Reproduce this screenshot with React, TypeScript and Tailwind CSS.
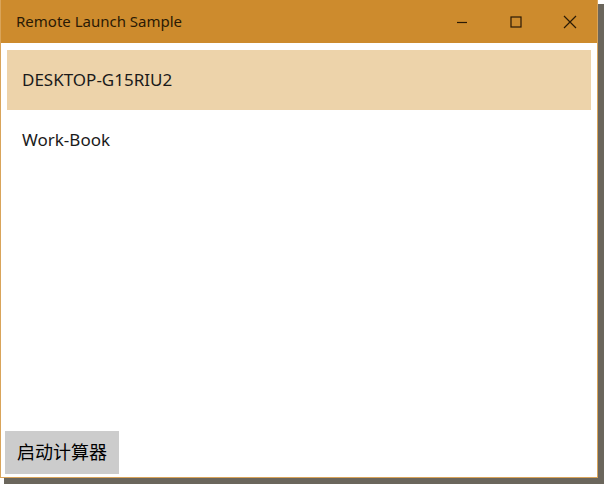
import React from "react";

const font = { fontFamily: '"Noto Sans", "Open Sans", "Noto Sans CJK SC", sans-serif' };

export default function App() {
    const devices = ["DESKTOP-G15RIU2", "Work-Book"];
    const selected = 0;

    return (
        <div className="w-[604px] h-[484px] bg-white relative overflow-hidden" style={font}>
            {/* drop shadow under the window */}
            <div className="absolute left-[4px] top-[4px] w-[600px] h-[480px] bg-[#6b665c]" />
            <div className="absolute left-0 top-0 w-[598px] h-[478px] flex flex-col bg-white border border-[#d9a45a] border-t-0">
                <div className="h-[43px] bg-[#cd8b2d] flex items-center shrink-0">
                    <span className="pl-[15px] text-[15px] text-[#2a1a05] flex-1">Remote Launch Sample</span>
                    <div className="flex items-center h-full">
                        <button className="w-[54px] h-full flex items-center justify-center">
                            <svg width="12" height="12" viewBox="0 0 12 12">
                                <path d="M1 6.5h10" stroke="#2a1a05" strokeWidth="1.2" />
                            </svg>
                        </button>
                        <button className="w-[54px] h-full flex items-center justify-center">
                            <svg width="12" height="12" viewBox="0 0 12 12">
                                <rect x="1" y="1" width="10" height="10" fill="none" stroke="#2a1a05" strokeWidth="1.2" />
                            </svg>
                        </button>
                        <button className="w-[54px] h-full flex items-center justify-center">
                            <svg width="14" height="14" viewBox="0 0 14 14">
                                <path d="M1 1l12 12M13 1L1 13" stroke="#2a1a05" strokeWidth="1.2" />
                            </svg>
                        </button>
                    </div>
                </div>
                <div className="flex-1 flex flex-col pt-[7px] px-[6px]">
                    <ul>
                        {devices.map((d, i) => (
                            <li
                                key={d}
                                className={`h-[60px] flex items-center px-[15px] text-[17px] text-[#1a1a1a] ${i === selected ? "bg-[#edd3aa]" : ""}`}
                            >
                                {d}
                            </li>
                        ))}
                    </ul>
                    <div className="flex-1" />
                    <button className="self-start mb-[3px] -ml-[2px] w-[114px] h-[43px] bg-[#cccccc] text-[18px] text-black">
                        启动计算器
                    </button>
                </div>
            </div>
        </div>
    );
}
